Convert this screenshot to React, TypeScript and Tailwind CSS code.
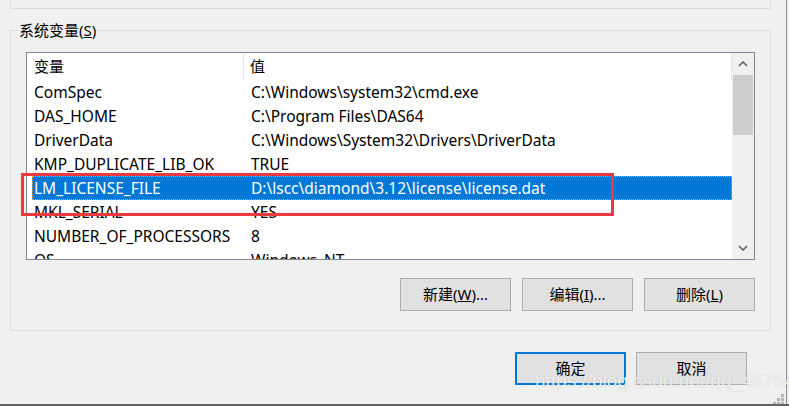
import React from "react";

const rows: [string, string][] = [
  ["ComSpec", "C:\\Windows\\system32\\cmd.exe"],
  ["DAS_HOME", "C:\\Program Files\\DAS64"],
  ["DriverData", "C:\\Windows\\System32\\Drivers\\DriverData"],
  ["KMP_DUPLICATE_LIB_OK", "TRUE"],
  ["LM_LICENSE_FILE", "D:\\lscc\\diamond\\3.12\\license\\license.dat"],
  ["MKL_SERIAL", "YES"],
  ["NUMBER_OF_PROCESSORS", "8"],
  ["OS", "Windows_NT"],
];

function Btn({ children, primary }: { children: React.ReactNode; primary?: boolean }) {
  return (
    <div
      className={
        "w-[111px] h-[33px] flex items-center justify-center bg-[#e1e1e1] text-[15px] text-black " +
        (primary ? "border-2 border-[#0078d7]" : "border border-[#adadad]")
      }
    >
      {children}
    </div>
  );
}

export default function App() {
  return (
    <div
      className="w-[789px] h-[406px] bg-[#f0f0f0] border-b-2 border-[#646464] relative overflow-hidden text-black"
      style={{ fontFamily: '"Noto Sans", "Noto Sans CJK SC", sans-serif' }}
    >
      <div className="w-[787px] h-full border-r border-[#8f8f8f] flex flex-col">
        {/* previous group box remnant */}
        <div className="ml-[10px] w-[761px] h-[9px] border-l border-r border-b border-[#dcdcdc]" />

        {/* system variables group */}
        <fieldset className="ml-[10px] mt-[11px] w-[761px] border border-[#dcdcdc] pb-[19px]">
          <legend className="ml-[7px] px-[1px] text-[15px] leading-[20px]">
            系统变量(<span className="underline">S</span>)
          </legend>
          <div className="mt-[12px] ml-[15px] w-[729px] h-[208px] border border-[#828790] bg-white flex">
            <div className="w-[705px] h-full overflow-hidden flex flex-col text-[15.5px]">
              <div className="h-[27px] flex items-center shrink-0 text-[15px]">
                <div className="w-[217px] h-full flex items-center pl-[7px] border-r border-[#e5e5e5]">变量</div>
                <div className="flex-1 h-full flex items-center pl-[6px] border-r border-[#e5e5e5]">值</div>
              </div>
              {rows.map(([k, v], i) => {
                const sel = i === 4;
                return (
                  <div key={k} className="h-[24px] shrink-0 flex pl-[5px]">
                    <div
                      className={
                        "flex-1 flex items-center " +
                        (sel ? "bg-[#0078d7] text-white outline outline-1 outline-dotted outline-[#f2a23c] -outline-offset-1" : "")
                      }
                    >
                      <div className="w-[217px] pl-[2px] whitespace-nowrap leading-[24px]">{k}</div>
                      <div className="flex-1 pl-[2px] whitespace-nowrap leading-[24px]">{v}</div>
                    </div>
                  </div>
                );
              })}
            </div>
            {/* scrollbar */}
            <div className="w-[22px] h-full bg-[#f0f0f0] flex flex-col">
              <div className="h-[22px] flex items-center justify-center">
                <svg width="10" height="6" viewBox="0 0 10 6">
                  <polyline points="1,5 5,1 9,5" fill="none" stroke="#606060" strokeWidth="1.6" />
                </svg>
              </div>
              <div className="mx-[1px] h-[60px] bg-[#cdcdcd]" />
              <div className="flex-1" />
              <div className="h-[22px] flex items-center justify-center">
                <svg width="10" height="6" viewBox="0 0 10 6">
                  <polyline points="1,1 5,5 9,1" fill="none" stroke="#606060" strokeWidth="1.6" />
                </svg>
              </div>
            </div>
          </div>
          <div className="mt-[18px] mr-[15px] flex justify-end gap-[11px]">
            <Btn>
              新建(<span className="underline">W</span>)...
            </Btn>
            <Btn>
              编辑(<span className="underline">I</span>)...
            </Btn>
            <Btn>
              删除(<span className="underline">L</span>)
            </Btn>
          </div>
        </fieldset>

        <div className="mt-[21px] mr-[39px] flex justify-end gap-[10px]">
          <Btn primary>确定</Btn>
          <Btn>取消</Btn>
        </div>
      </div>

      {/* red annotation box */}
      <div className="absolute left-[21px] top-[173px] w-[593px] h-[43px] border-[3px] border-[#ea3a3f]" />

      {/* watermark */}
      <div
        className="absolute left-[535px] top-[369px] text-[19px] leading-[24px] text-white/85 whitespace-nowrap"
        style={{ fontFamily: '"Liberation Sans", Arial, sans-serif', textShadow: "0 0 1px rgba(0,0,0,0.3)" }}
      >
        https://blog.csdn.net/qq_45754730
      </div>

      {/* resize grip */}
      <svg className="absolute left-[772px] top-[393px]" width="14" height="12" viewBox="0 0 14 12">
        <rect x="9" y="1" width="3" height="3" fill="#b4b4b4" />
        <rect x="5" y="5" width="3" height="3" fill="#b4b4b4" />
        <rect x="9" y="5" width="3" height="3" fill="#b4b4b4" />
        <rect x="1" y="9" width="3" height="3" fill="#b4b4b4" />
        <rect x="5" y="9" width="3" height="3" fill="#b4b4b4" />
        <rect x="9" y="9" width="3" height="3" fill="#b4b4b4" />
      </svg>
    </div>
  );
}
